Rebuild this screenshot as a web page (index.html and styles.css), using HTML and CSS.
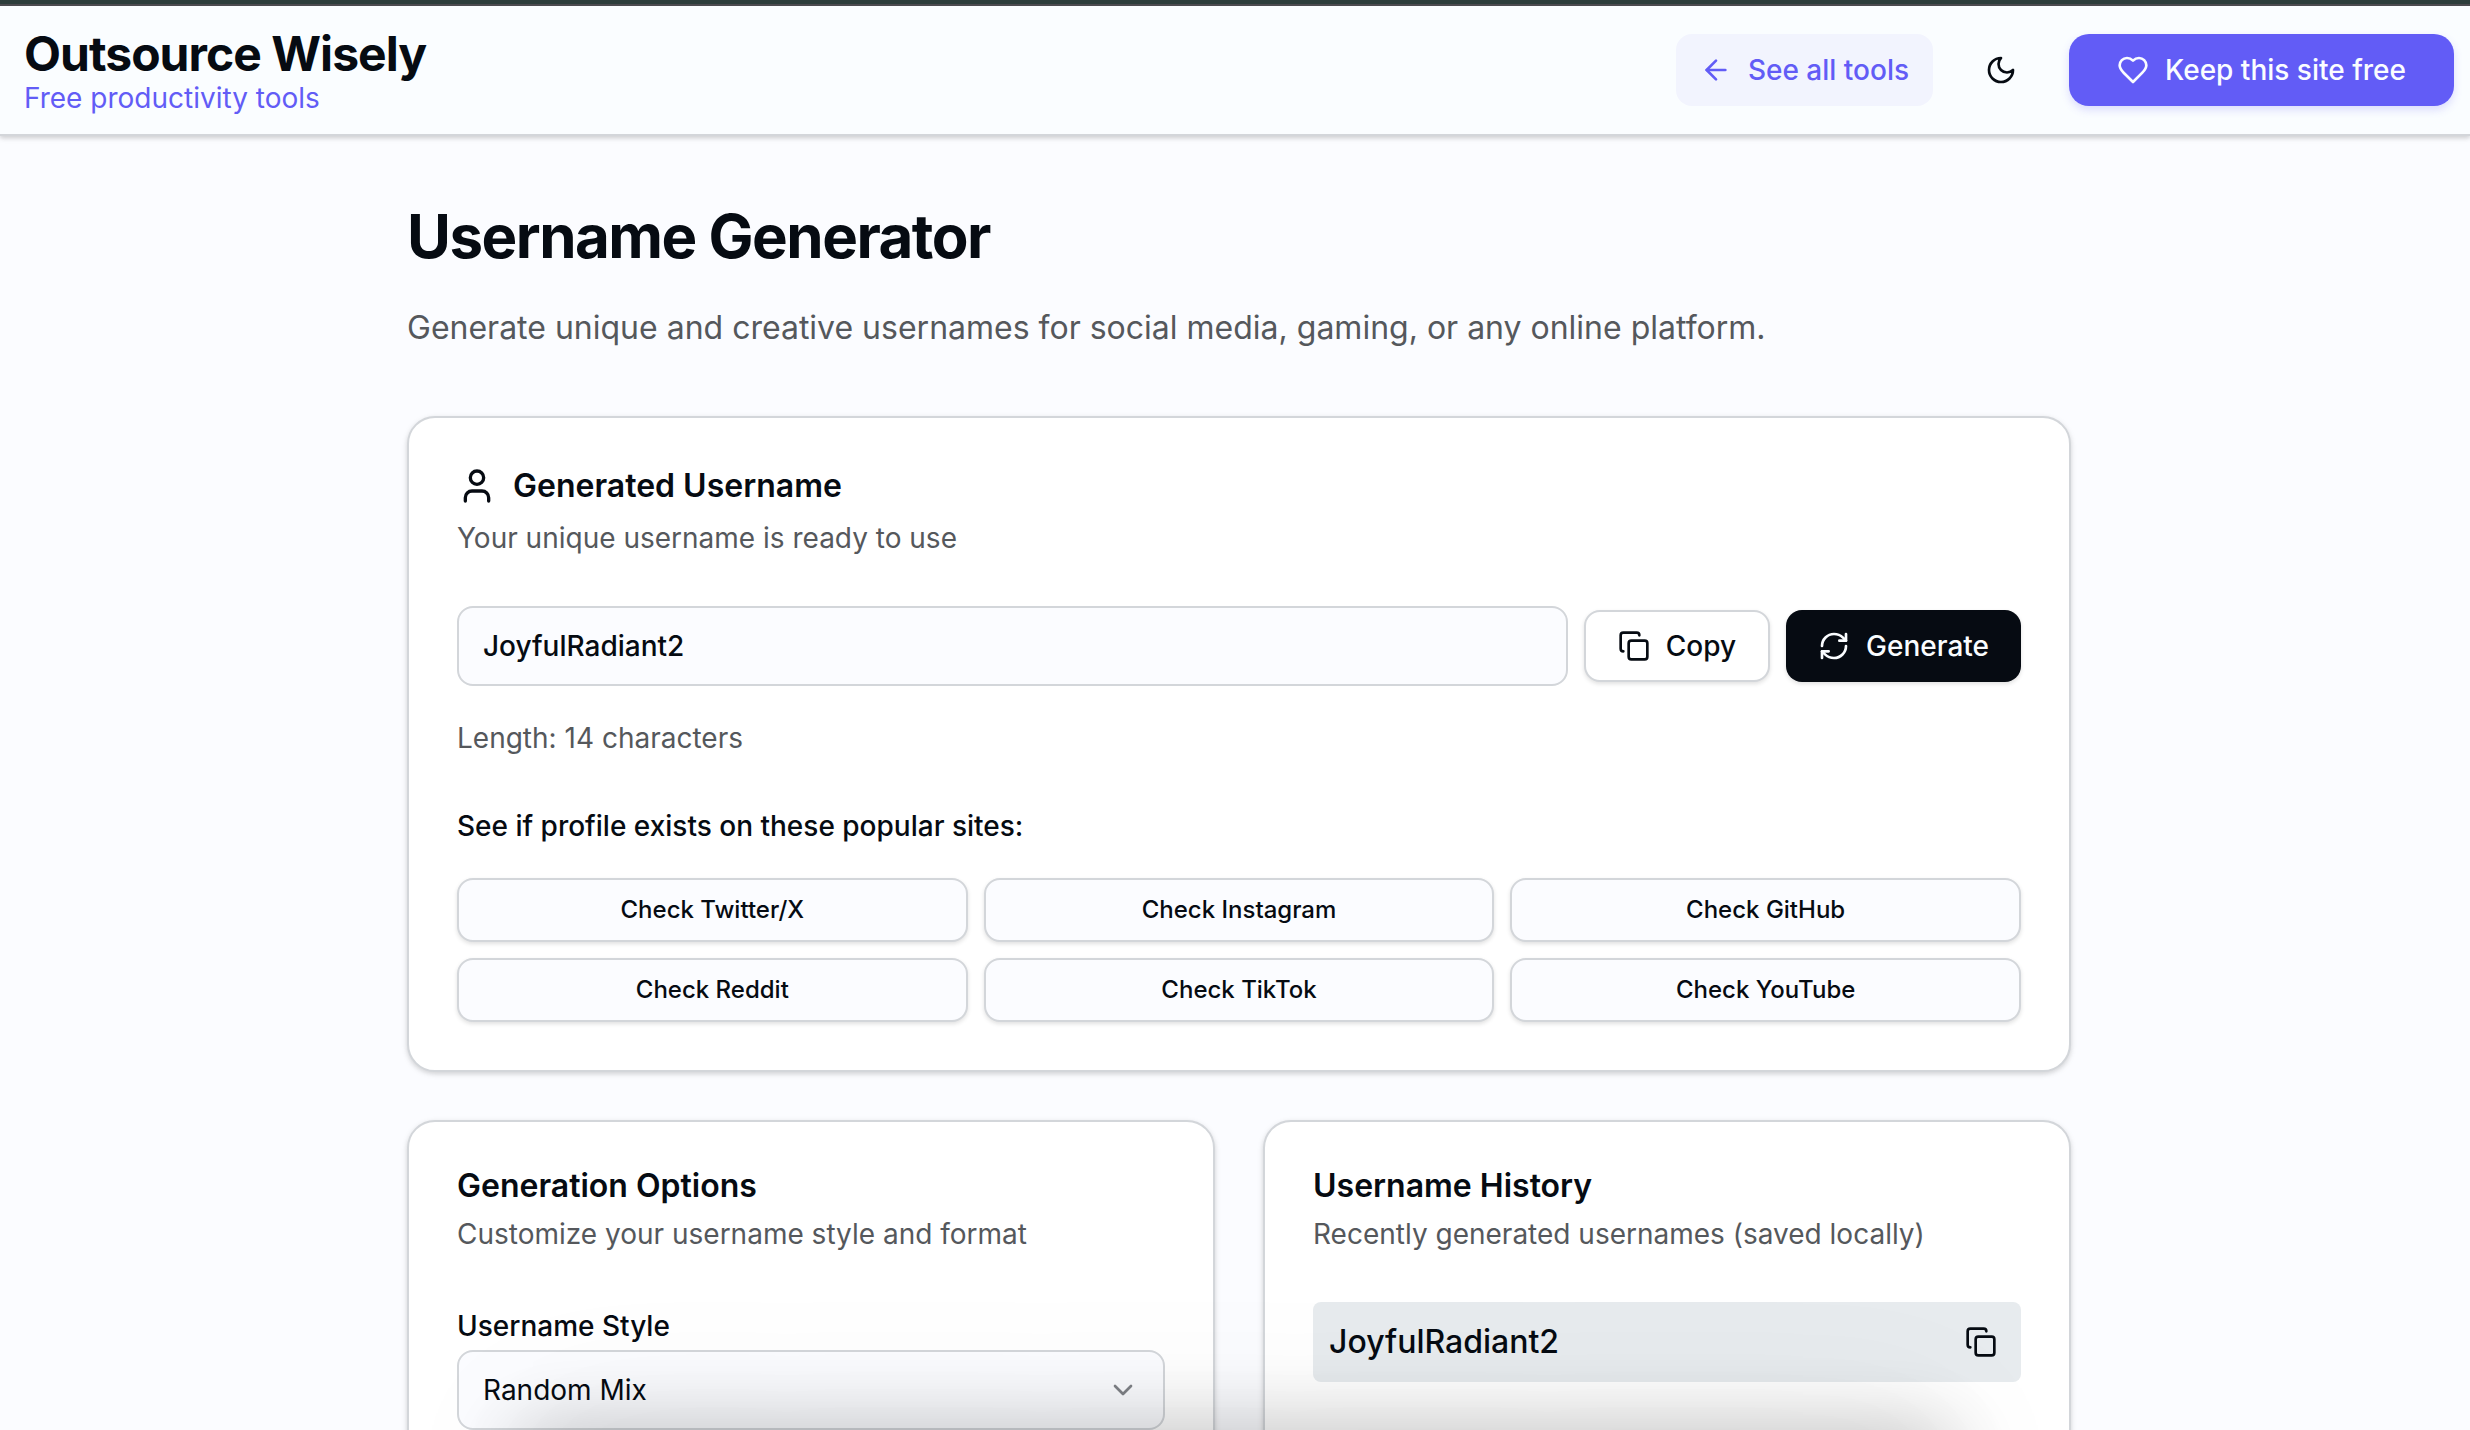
FILE: index.html
```html
<!DOCTYPE html>
<html lang="en">
<head>
  <meta charset="UTF-8">
  <title>Username Generator - Outsource Wisely</title>
  <meta name="viewport" content="width=device-width, initial-scale=1.0">
  <link rel="stylesheet" href="styles.css">
</head>
<body>
  <header class="site-header">
    <a class="brand" href="#">
      <span class="brand-name">Outsource Wisely</span>
      <span class="brand-tagline">Free productivity tools</span>
    </a>
    <nav class="header-nav">
      <a class="btn btn-soft" href="#">
        <svg class="icon" viewBox="0 0 24 24"><path d="m12 19-7-7 7-7"/><path d="M19 12H5"/></svg>
        See all tools
      </a>
      <button class="btn btn-icon" type="button" aria-label="Toggle theme">
        <svg class="icon" viewBox="0 0 24 24"><path d="M12 3a6 6 0 0 0 9 9 9 9 0 1 1-9-9Z"/></svg>
      </button>
      <a class="btn btn-primary" href="#">
        <svg class="icon" viewBox="0 0 24 24"><path d="M19 14c1.490-1.460 3-3.210 3-5.500A5.500 5.500 0 0 0 16.500 3c-1.760 0-3 .5-4.500 2-1.500-1.500-2.740-2-4.500-2A5.500 5.500 0 0 0 2 8.500c0 2.300 1.500 4.050 3 5.500l7 7Z"/></svg>
        Keep this site free
      </a>
    </nav>
  </header>

  <main class="page">
    <div class="container">
      <h1>Username Generator</h1>
      <p class="lead">Generate unique and creative usernames for social media, gaming, or any online platform.</p>

      <section class="card">
        <h2 class="card-title with-icon">
          <svg class="icon icon-lg" viewBox="0 0 24 24"><path d="M19 21v-2a4 4 0 0 0-4-4H9a4 4 0 0 0-4 4v2"/><circle cx="12" cy="7" r="4"/></svg>
          Generated Username
        </h2>
        <p class="card-desc">Your unique username is ready to use</p>

        <div class="username-row">
          <input class="field username-input" type="text" value="JoyfulRadiant2" aria-label="Generated username" readonly>
          <button class="btn btn-outline" type="button">
            <svg class="icon" viewBox="0 0 24 24"><rect width="14" height="14" x="8" y="8" rx="2" ry="2"/><path d="M4 16c-1.100 0-2-.9-2-2V4c0-1.100.9-2 2-2h10c1.100 0 2 .9 2 2"/></svg>
            Copy
          </button>
          <button class="btn btn-dark" type="button">
            <svg class="icon" viewBox="0 0 24 24"><path d="M3 12a9 9 0 0 1 9-9 9.750 9.750 0 0 1 6.740 2.740L21 8"/><path d="M21 3v5h-5"/><path d="M21 12a9 9 0 0 1-9 9 9.750 9.750 0 0 1-6.740-2.740L3 16"/><path d="M8 16H3v5"/></svg>
            Generate
          </button>
        </div>
        <p class="length">Length: 14 characters</p>

        <h3 class="check-title">See if profile exists on these popular sites:</h3>
        <div class="check-grid">
          <button class="btn-check" type="button">Check Twitter/X</button>
          <button class="btn-check" type="button">Check Instagram</button>
          <button class="btn-check" type="button">Check GitHub</button>
          <button class="btn-check" type="button">Check Reddit</button>
          <button class="btn-check" type="button">Check TikTok</button>
          <button class="btn-check" type="button">Check YouTube</button>
        </div>
      </section>

      <div class="columns">
        <section class="card">
          <h2 class="card-title">Generation Options</h2>
          <p class="card-desc">Customize your username style and format</p>
          <label class="field-label" for="style">Username Style</label>
          <div class="select-wrap">
            <select class="field" id="style">
              <option>Random Mix</option>
            </select>
            <svg class="icon chevron" viewBox="0 0 24 24"><path d="m6 9 6 6 6-6"/></svg>
          </div>
        </section>

        <section class="card">
          <h2 class="card-title">Username History</h2>
          <p class="card-desc">Recently generated usernames (saved locally)</p>
          <ul class="history">
            <li>
              <span>JoyfulRadiant2</span>
              <button class="history-copy" type="button" aria-label="Copy JoyfulRadiant2">
                <svg class="icon" viewBox="0 0 24 24"><rect width="14" height="14" x="8" y="8" rx="2" ry="2"/><path d="M4 16c-1.100 0-2-.9-2-2V4c0-1.100.9-2 2-2h10c1.100 0 2 .9 2 2"/></svg>
              </button>
            </li>
          </ul>
        </section>
      </div>
    </div>
  </main>
  <div class="bottom-shade"></div>
</body>
</html>
```
FILE: styles.css
```css
* {
  box-sizing: border-box;
}
body {
  margin: 0;
  height: 100vh;
  overflow: hidden;
  font-family: Inter, "Liberation Sans", sans-serif;
  font-size: 28px;
  line-height: 40px;
  color: #060b12;
  background: #fbfcff;
}
h1, h2, h3, p, ul {
  margin: 0;
  padding: 0;
}
a {
  color: inherit;
  text-decoration: none;
}
button, input, select {
  font: inherit;
  color: inherit;
}

/* icons */
.icon {
  width: 32px;
  height: 32px;
  flex: none;
  fill: none;
  stroke: currentColor;
  stroke-width: 2;
  stroke-linecap: round;
  stroke-linejoin: round;
}
.icon-lg {
  width: 40px;
  height: 40px;
}

/* header */
.site-header {
  display: flex;
  justify-content: space-between;
  align-items: center;
  height: 136px;
  padding: 2px 16px 0 24px;
  background: #fafdff;
  border-top: 4px solid #2d3e3b;
  border-bottom: 2px solid #d3d6da;
  box-shadow: inset 0 2px 0 #4b4b4f, 0 2px 6px rgba(0, 0, 0, 0.1), 0 2px 4px rgba(0, 0, 0, 0.1);
}
.brand-name,
.brand-tagline {
  display: block;
}
.brand-name {
  font-size: 48px;
  line-height: 56px;
  font-weight: 700;
  letter-spacing: -0.02em;
}
.brand-tagline {
  line-height: 32px;
  color: #625cf6;
}
.header-nav {
  display: flex;
  align-items: center;
  gap: 32px;
}

/* buttons */
.btn {
  display: inline-flex;
  align-items: center;
  justify-content: center;
  gap: 16px;
  height: 72px;
  padding: 0 32px;
  border: 0;
  border-radius: 16px;
  background: none;
  font-weight: 500;
  white-space: nowrap;
}
.btn-soft {
  padding: 0 24px;
  color: #625cf6;
  background: #f2f4fe;
}
.btn-icon {
  width: 72px;
  padding: 0;
}
.btn-primary {
  padding: 0 48px;
  border-radius: 20px;
  color: #fafdff;
  background: #625cf6;
  box-shadow: 0 4px 8px rgba(98, 92, 246, 0.2);
}
.btn-outline {
  border: 2px solid #d3d6da;
  background: #fff;
  box-shadow: 0 2px 4px rgba(0, 0, 0, 0.12);
}
.btn-dark {
  color: #fafdff;
  background: #060b12;
  box-shadow: 0 2px 4px rgba(0, 0, 0, 0.12);
}

/* page */
.page {
  padding: 64px 48px 64px 56px;
}
.container {
  max-width: 1664px;
  margin: 0 auto;
}
h1 {
  font-size: 60px;
  line-height: 72px;
  font-weight: 700;
  letter-spacing: -0.025em;
}
.lead {
  margin-top: 32px;
  font-size: 32px;
  line-height: 48px;
  color: #55585c;
}
.card {
  padding: 48px;
  border: 2px solid #d3d6da;
  border-radius: 28px;
  background: #fff;
  box-shadow: 0 2px 6px rgba(0, 0, 0, 0.1), 0 2px 4px rgba(0, 0, 0, 0.08);
}
.lead + .card {
  margin-top: 64px;
}
.card-title {
  font-size: 32px;
  line-height: 32px;
  font-weight: 600;
}
.with-icon {
  display: flex;
  align-items: center;
  gap: 16px;
  line-height: 40px;
}
.card-desc {
  margin-top: 12px;
  color: #55585c;
}

.field {
  width: 100%;
  height: 80px;
  padding: 0 24px;
  border: 2px solid #d3d6da;
  border-radius: 16px;
  background: #fbfcff;
  outline: none;
  appearance: none;
}
.username-row {
  display: flex;
  align-items: center;
  gap: 16px;
  margin-top: 48px;
}
.username-input {
  flex: 1;
  min-width: 0;
  font-weight: 500;
}
.length {
  margin-top: 32px;
  color: #55585c;
}
.check-title {
  margin-top: 48px;
  font-size: 28px;
  font-weight: 500;
}
.check-grid {
  display: grid;
  grid-template-columns: repeat(3, 1fr);
  gap: 16px;
  margin-top: 32px;
}
.btn-check {
  height: 64px;
  border: 2px solid #d3d6da;
  border-radius: 16px;
  background: #fbfcff;
  box-shadow: 0 2px 4px rgba(0, 0, 0, 0.12);
  font-size: 24px;
  line-height: 32px;
  font-weight: 500;
}

.columns {
  display: grid;
  grid-template-columns: 1fr 1fr;
  gap: 48px;
  margin-top: 48px;
}
.field-label {
  display: block;
  margin-top: 48px;
  line-height: 48px;
  font-weight: 500;
}
.select-wrap {
  position: relative;
}
.chevron {
  position: absolute;
  top: 24px;
  right: 26px;
  opacity: 0.5;
  pointer-events: none;
}
.history {
  margin-top: 48px;
  list-style: none;
}
.history li {
  display: flex;
  align-items: center;
  justify-content: space-between;
  height: 80px;
  padding: 0 16px;
  border-radius: 8px;
  background: #e7ebee;
  font-size: 32px;
  font-weight: 500;
}
.history-copy {
  display: flex;
  padding: 8px;
  border: 0;
  background: none;
}

/* shadow cast from the bottom edge of the window */
.bottom-shade {
  position: fixed;
  top: 100%;
  left: 21%;
  right: 21%;
  height: 80px;
  box-shadow: 0 0 80px rgba(0, 0, 0, 0.24), 0 0 160px rgba(0, 0, 0, 0.08);
  pointer-events: none;
}
```
